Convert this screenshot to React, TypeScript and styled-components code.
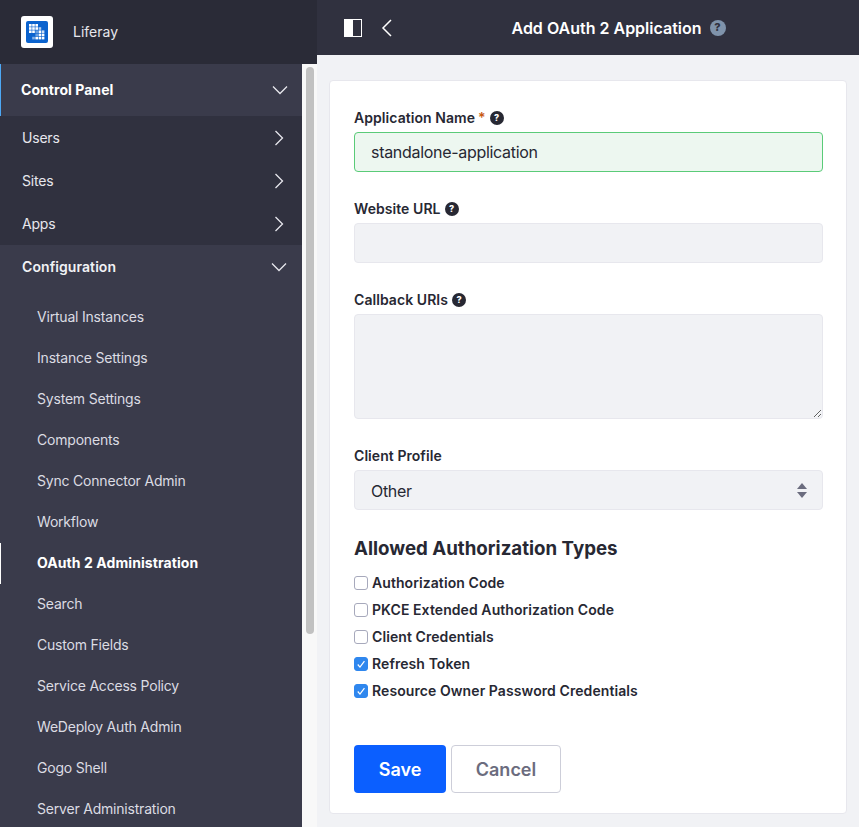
import React from 'react'
import styled, { createGlobalStyle } from 'styled-components'

const GlobalStyle = createGlobalStyle`
  html, body {
    margin: 0;
    height: 100%;
    overflow: hidden;
    background: #f1f2f5;
    font-family: Inter, "Liberation Sans", sans-serif;
    -webkit-font-smoothing: antialiased;
  }
  * {
    box-sizing: border-box;
  }
`

const ChevronDown = () => (
  <NavIcon viewBox='0 0 16 16'>
    <path d='M1 4.5 8 11.5 15 4.5' />
  </NavIcon>
)

const ChevronRight = () => (
  <NavIcon viewBox='0 0 16 16'>
    <path d='M4.5 1 11.5 8 4.5 15' />
  </NavIcon>
)

const HelpBadge = ({ size = 14, color = '#272833' }: { size?: number; color?: string }) => (
  <HelpDot $size={size} $color={color}>
    ?
  </HelpDot>
)

// x, y, opacity of each square in the logo
const LOGO_DOTS = [
  [0, 0, 1], [1, 0, 1], [2, 0, 1],
  [0, 1, 1], [1, 1, 1], [2, 1, 1], [3, 1, 0.7],
  [0, 2, 1], [1, 2, 1], [2, 2, 0.4], [3, 2, 1], [4, 2, 0.8],
  [2, 3, 0.4], [3, 3, 1], [4, 3, 1],
  [1, 4, 0.5], [2, 4, 1], [3, 4, 1], [4, 4, 1],
]

const CHILDREN = [
  'Virtual Instances',
  'Instance Settings',
  'System Settings',
  'Components',
  'Sync Connector Admin',
  'Workflow',
  'OAuth 2 Administration',
  'Search',
  'Custom Fields',
  'Service Access Policy',
  'WeDeploy Auth Admin',
  'Gogo Shell',
  'Server Administration',
]

const GRANTS = [
  { label: 'Authorization Code', checked: false },
  { label: 'PKCE Extended Authorization Code', checked: false },
  { label: 'Client Credentials', checked: false },
  { label: 'Refresh Token', checked: true },
  { label: 'Resource Owner Password Credentials', checked: true },
]

const App = () => {
  return (
    <Page>
      <GlobalStyle />
      <Sidebar>
        <Brand>
          <LogoTile>
            <svg width='22' height='22' viewBox='0 0 22 22'>
              <rect width='22' height='22' rx='2' fill='#0b63ce' />
              {LOGO_DOTS.map(([x, y, o]) => (
                <rect
                  key={`${x}-${y}`}
                  x={3 + x * 3.2}
                  y={3 + y * 3.2}
                  width='2.6'
                  height='2.6'
                  fill='#fff'
                  opacity={o}
                />
              ))}
            </svg>
          </LogoTile>
          <BrandName>Liferay</BrandName>
        </Brand>
        <SideBody>
          <Nav>
            <PanelRow>
              <PanelTitle>Control Panel</PanelTitle>
              <ChevronDown />
            </PanelRow>
            <GroupRow>
              <RowText>Users</RowText>
              <ChevronRight />
            </GroupRow>
            <GroupRow>
              <RowText>Sites</RowText>
              <ChevronRight />
            </GroupRow>
            <GroupRow>
              <RowText>Apps</RowText>
              <ChevronRight />
            </GroupRow>
            <OpenGroup>
              <OpenRow>
                <RowText>Configuration</RowText>
                <ChevronDown />
              </OpenRow>
              {CHILDREN.map((name) => (
                <ChildRow key={name} $active={name === 'OAuth 2 Administration'}>
                  {name}
                </ChildRow>
              ))}
            </OpenGroup>
          </Nav>
          <ScrollTrack>
            <ScrollThumb />
          </ScrollTrack>
        </SideBody>
      </Sidebar>
      <Main>
        <TopBar>
          <svg width='18' height='18' viewBox='0 0 18 18'>
            <rect x='0.5' y='0.5' width='17' height='17' fill='none' stroke='#fff' />
            <rect width='9' height='18' fill='#fff' />
          </svg>
          <BackIcon viewBox='0 0 12 18'>
            <path d='M10 1 2 9 10 17' />
          </BackIcon>
          <TitleWrap>
            <Title>Add OAuth 2 Application</Title>
            <HelpBadge size={16} color='#7f93ab' />
          </TitleWrap>
        </TopBar>
        <Content>
          <Card>
            <Field>
              <Label>
                Application Name <Required>*</Required>
                <HelpBadge />
              </Label>
              <ValidInput defaultValue='standalone-application' />
            </Field>
            <Field>
              <Label>
                Website URL
                <HelpBadge />
              </Label>
              <TextInput />
            </Field>
            <Field>
              <Label>
                Callback URIs
                <HelpBadge />
              </Label>
              <TextArea />
            </Field>
            <Field>
              <Label>Client Profile</Label>
              <SelectWrap>
                <Select defaultValue='other'>
                  <option value='other'>Other</option>
                </Select>
                <SelectArrows width='10' height='15' viewBox='0 0 10 15'>
                  <path d='M5 0 10 6H0Z' />
                  <path d='M5 15 0 9H10Z' />
                </SelectArrows>
              </SelectWrap>
            </Field>
            <SectionTitle>Allowed Authorization Types</SectionTitle>
            <Checks>
              {GRANTS.map((grant) => (
                <CheckRow key={grant.label}>
                  <CheckBox $checked={grant.checked}>
                    {grant.checked && (
                      <svg width='14' height='14' viewBox='0 0 14 14'>
                        <path d='M3.2 7.6 5.8 10.6 11 3.6' fill='none' stroke='#fff' strokeWidth='1.4' />
                      </svg>
                    )}
                  </CheckBox>
                  {grant.label}
                </CheckRow>
              ))}
            </Checks>
            <Actions>
              <SaveButton>Save</SaveButton>
              <CancelButton>Cancel</CancelButton>
            </Actions>
          </Card>
        </Content>
      </Main>
    </Page>
  )
}

const Page = styled.div`
  display: flex;
  width: 859px;
  height: 827px;
  overflow: hidden;
`

const Sidebar = styled.div`
  display: flex;
  flex-direction: column;
  flex: none;
  width: 317px;
  height: 100%;
`

const Brand = styled.div`
  display: flex;
  align-items: center;
  flex: none;
  height: 64px;
  padding-left: 21px;
  background: #2a2b37;
`

const LogoTile = styled.div`
  display: flex;
  align-items: center;
  justify-content: center;
  width: 32px;
  height: 32px;
  border-radius: 3px;
  background: #fff;
`

const BrandName = styled.span`
  margin: 0 0 2px 20px;
  font-size: 14px;
  color: #e7e7ed;
`

const SideBody = styled.div`
  display: flex;
  flex: 1;
  min-height: 0;
`

const Nav = styled.nav`
  flex: none;
  width: 302px;
  background: #30313f;
  overflow: hidden;
`

const NavIcon = styled.svg`
  flex: none;
  width: 16px;
  height: 16px;
  fill: none;
  stroke: #e7e7ed;
  stroke-width: 1.3;
`

const RowText = styled.span`
  margin-bottom: 1px;
`

const PanelRow = styled.div`
  display: flex;
  align-items: center;
  justify-content: space-between;
  height: 52px;
  padding: 0 14px 0 20px;
  border-left: 1px solid #4da8f5;
  background: #3a3b4b;
`

const PanelTitle = styled.span`
  margin-bottom: 1px;
  font-size: 14px;
  font-weight: 700;
  letter-spacing: 0.05px;
  color: #fff;
`

const GroupRow = styled.div`
  display: flex;
  align-items: center;
  justify-content: space-between;
  height: 43px;
  padding: 0 15px 0 22px;
  font-size: 14px;
  letter-spacing: -0.2px;
  color: #e7e7ed;
`

const OpenGroup = styled.div`
  padding-bottom: 40px;
  background: #3a3b4b;
`

const OpenRow = styled.div`
  display: flex;
  align-items: center;
  justify-content: space-between;
  height: 44px;
  margin-bottom: 8px;
  padding: 0 15px 0 22px;
  font-size: 14px;
  font-weight: 600;
  letter-spacing: 0.08px;
  color: #f1f2f5;
`

const ChildRow = styled.div<{ $active?: boolean }>`
  display: flex;
  align-items: center;
  height: 41px;
  padding-left: ${(props) => (props.$active ? '36px' : '37px')};
  padding-bottom: 2px;
  border-left: ${(props) => (props.$active ? '1px solid #fff' : 'none')};
  font-size: 14px;
  font-weight: ${(props) => (props.$active ? 700 : 400)};
  letter-spacing: ${(props) => (props.$active ? '0.08px' : '-0.2px')};
  color: ${(props) => (props.$active ? '#fff' : '#dcdce3')};
`

const ScrollTrack = styled.div`
  flex: none;
  width: 15px;
  padding: 3px 3px 0 4px;
  background: #f8f8f8;
`

const ScrollThumb = styled.div`
  width: 8px;
  height: 567px;
  border-radius: 4px;
  background: #c1c1c1;
`

const Main = styled.div`
  display: flex;
  flex-direction: column;
  flex: 1;
  min-width: 0;
`

const TopBar = styled.div`
  display: flex;
  align-items: center;
  flex: none;
  height: 55px;
  padding: 0 15px 0 27px;
  background: #30313f;
`

const BackIcon = styled.svg`
  flex: none;
  width: 12px;
  height: 18px;
  margin-left: 19px;
  fill: none;
  stroke: #fff;
  stroke-width: 1.5;
`

const TitleWrap = styled.div`
  display: flex;
  align-items: center;
  justify-content: center;
  flex: 1;
  gap: 8px;
`

const Title = styled.h1`
  margin: 0;
  font-size: 16px;
  font-weight: 600;
  color: #fff;
`

const HelpDot = styled.span<{ $size: number; $color: string }>`
  display: inline-flex;
  align-items: center;
  justify-content: center;
  flex: none;
  width: ${(props) => props.$size}px;
  height: ${(props) => props.$size}px;
  border-radius: 50%;
  background: ${(props) => props.$color};
  font-size: ${(props) => props.$size - 5}px;
  font-weight: 800;
  line-height: 1;
  color: ${(props) => (props.$size > 14 ? '#30313f' : '#fff')};
`

const Content = styled.div`
  flex: 1;
  padding: 25px 12px 13px;
  background: #f1f2f5;
`

const Card = styled.div`
  height: 734px;
  padding: 28px 23px 0 24px;
  border: 1px solid #e7e7ed;
  border-radius: 4px;
  background: #fff;
`

const Field = styled.div`
  margin-bottom: 28px;
`

const Label = styled.label`
  display: flex;
  align-items: center;
  gap: 4px;
  height: 18px;
  margin-bottom: 5px;
  padding-bottom: 1px;
  font-size: 14px;
  font-weight: 600;
  letter-spacing: 0.06px;
  color: #272833;
`

const Required = styled.span`
  margin-left: -1px;
  font-size: 14px;
  color: #c85a12;
`

const TextInput = styled.input`
  display: block;
  width: 100%;
  height: 40px;
  padding: 0 16px;
  border: 1px solid #e7e7ed;
  border-radius: 4px;
  outline: none;
  background: #f1f2f5;
  font-family: inherit;
  font-size: 16px;
  letter-spacing: -0.3px;
  color: #272833;
`

const ValidInput = styled(TextInput)`
  border-color: #5acb78;
  background: #edf7f0;
`

const TextArea = styled.textarea`
  display: block;
  width: 100%;
  height: 105px;
  padding: 8px 16px;
  border: 1px solid #e7e7ed;
  border-radius: 4px;
  outline: none;
  background: #f1f2f5;
  font-family: inherit;
  font-size: 16px;
`

const SelectWrap = styled.div`
  position: relative;
`

const Select = styled.select`
  display: block;
  width: 100%;
  height: 40px;
  padding: 2px 16px 0;
  border: 1px solid #e7e7ed;
  border-radius: 4px;
  outline: none;
  appearance: none;
  background: #f1f2f5;
  font-family: inherit;
  font-size: 16px;
  letter-spacing: -0.3px;
  color: #272833;
`

const SelectArrows = styled.svg`
  position: absolute;
  top: 13px;
  right: 16px;
  fill: #6b6c7e;
`

const SectionTitle = styled.h2`
  margin: 0 0 9px;
  font-size: 18.7px;
  font-weight: 700;
  line-height: 22px;
  color: #272833;
`

const Checks = styled.div`
  display: flex;
  flex-direction: column;
`

const CheckRow = styled.label`
  display: flex;
  align-items: center;
  gap: 4px;
  height: 27px;
  font-size: 14px;
  font-weight: 600;
  letter-spacing: 0.08px;
  color: #272833;
`

const CheckBox = styled.span<{ $checked: boolean }>`
  display: flex;
  align-items: center;
  justify-content: center;
  flex: none;
  width: 14px;
  height: 14px;
  margin-top: 1px;
  border: 1px solid ${(props) => (props.$checked ? '#2f87ee' : '#a7a9bc')};
  border-radius: 3px;
  background: ${(props) => (props.$checked ? '#2f87ee' : '#fff')};
`

const Actions = styled.div`
  display: flex;
  gap: 5px;
  margin-top: 41px;
`

const SaveButton = styled.button`
  width: 92px;
  height: 48px;
  border: none;
  border-radius: 4px;
  background: #0b5fff;
  font-family: inherit;
  font-size: 18px;
  font-weight: 600;
  color: #fff;
`

const CancelButton = styled.button`
  width: 110px;
  height: 48px;
  border: 1px solid #cdced9;
  border-radius: 4px;
  background: #fff;
  font-family: inherit;
  font-size: 18px;
  font-weight: 600;
  color: #6b6c7e;
`

export default App
